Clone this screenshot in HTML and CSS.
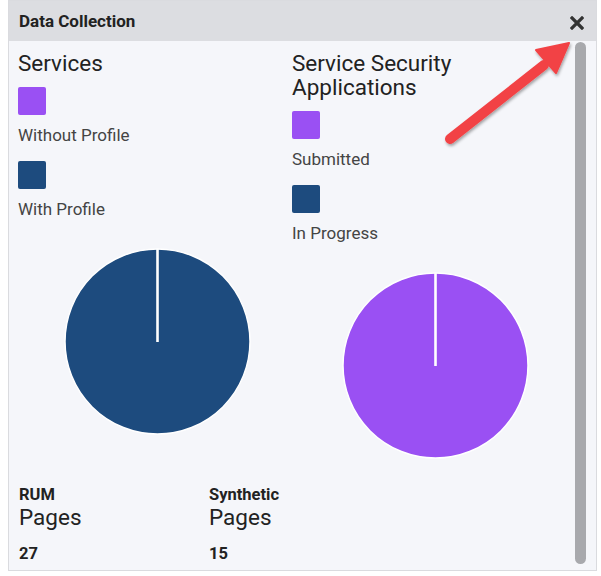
FILE: index.html
```html
<!doctype html>
<html>
<head>
<meta charset="utf-8">
<title>Data Collection</title>
<link rel="stylesheet" href="styles.css">
</head>
<body>
<div class="panel">
	<div class="panel-head">
		<span class="panel-title">Data Collection</span>
		<svg class="close" width="14" height="14" viewBox="0 0 14 14"><path d="M2 2L12 12M12 2L2 12" stroke="#333" stroke-width="3.2" stroke-linecap="square"/></svg>
	</div>
	<div class="panel-body">
		<div class="content">
			<div class="charts">
				<div class="col">
					<h2>Services</h2>
					<ul class="legend">
						<li><i class="sw purple"></i><span>Without Profile</span></li>
						<li><i class="sw blue"></i><span>With Profile</span></li>
					</ul>
					<div class="chart">
						<svg width="187" height="187" viewBox="0 0 187 187">
							<circle cx="93.5" cy="93.5" r="92.5" fill="#1d4b7e" stroke="#fff" stroke-width="1.5"/>
							<line x1="93.5" y1="1" x2="93.5" y2="94" stroke="#fff" stroke-width="2.6"/>
						</svg>
					</div>
				</div>
				<div class="col">
					<h2>Service Security<br>Applications</h2>
					<ul class="legend">
						<li><i class="sw purple"></i><span>Submitted</span></li>
						<li><i class="sw blue"></i><span>In Progress</span></li>
					</ul>
					<div class="chart">
						<svg width="187" height="187" viewBox="0 0 187 187">
							<circle cx="93.5" cy="93.5" r="92.5" fill="#9a50f3" stroke="#fff" stroke-width="1.5"/>
							<line x1="93.5" y1="1" x2="93.5" y2="94" stroke="#fff" stroke-width="2.6"/>
						</svg>
					</div>
				</div>
			</div>
			<div class="stats">
				<div class="stat">
					<div class="stat-type">RUM</div>
					<div class="stat-name">Pages</div>
					<div class="stat-num">27</div>
				</div>
				<div class="stat">
					<div class="stat-type">Synthetic</div>
					<div class="stat-name">Pages</div>
					<div class="stat-num">15</div>
				</div>
			</div>
		</div>
		<div class="rail"></div>
	</div>
	<!-- annotation arrow -->
	<svg class="arrow" width="200" height="130" viewBox="0 0 200 130">
		<defs>
			<filter id="sh" x="-20%" y="-20%" width="140%" height="140%">
				<feDropShadow dx="1" dy="2" stdDeviation="1.8" flood-color="#000" flood-opacity="0.35"/>
			</filter>
		</defs>
		<g filter="url(#sh)" fill="#f24245" stroke="#f24245">
			<line x1="41" y1="107" x2="135" y2="33" stroke-width="10" stroke-linecap="round"/>
			<polygon points="160,11 127,18 147,41" stroke-width="2" stroke-linejoin="round"/>
		</g>
	</svg>
</div>
</body>
</html>
```

FILE: styles.css
```css
*{ margin:0; padding:0; list-style:none; box-sizing:border-box;}
body{ background:#fff; font-family:Roboto, "Liberation Sans", sans-serif; color:#222;}
.panel{ position:relative; width:589px; height:571px; margin-left:8px; border:1px solid #dadbdf; background:#f5f6fa; display:flex; flex-direction:column;}
.panel-head{ height:40px; background:#dcdde1; display:flex; align-items:center; justify-content:space-between; padding:0 12px 0 10px;}
.panel-title{ font-size:17px; font-weight:bold; color:#222;}
.close{ display:block; margin-top:3px;}
.panel-body{ flex:1; display:flex; min-height:0;}
.content{ flex:1; padding:10px 0 0 9px;}
.rail{ width:11px; margin:1px 10px 6px 0; background:#a8a9ad; border-radius:6px;}
.charts{ display:grid; grid-template-columns:274px 1fr;}
h2{ font-size:22.5px; font-weight:normal; line-height:24px; color:#222;}
.legend{ margin-top:12px; display:flex; flex-direction:column; gap:16px;}
.legend li{ display:flex; flex-direction:column; align-items:flex-start;}
.sw{ display:block; width:28px; height:28px; border-radius:2px;}
.purple{ background:#9a50f3;}
.blue{ background:#1d4b7e;}
.legend span{ margin-top:10px; font-size:17px; line-height:20px; color:#444;}
.chart{ margin-top:29px; display:flex; justify-content:center; padding-left:4px;}
.chart svg{ display:block;}
.stats{ margin-top:26px; display:grid; grid-template-columns:190px 1fr; padding-left:1px;}
.stat-type{ font-size:16.5px; font-weight:bold; line-height:20px; color:#222;}
.stat-name{ font-size:22.5px; line-height:25px; color:#222;}
.stat-num{ margin-top:14px; font-size:16.5px; font-weight:bold; line-height:20px; color:#222;}
.arrow{ position:absolute; left:400px; top:31px;}
```
